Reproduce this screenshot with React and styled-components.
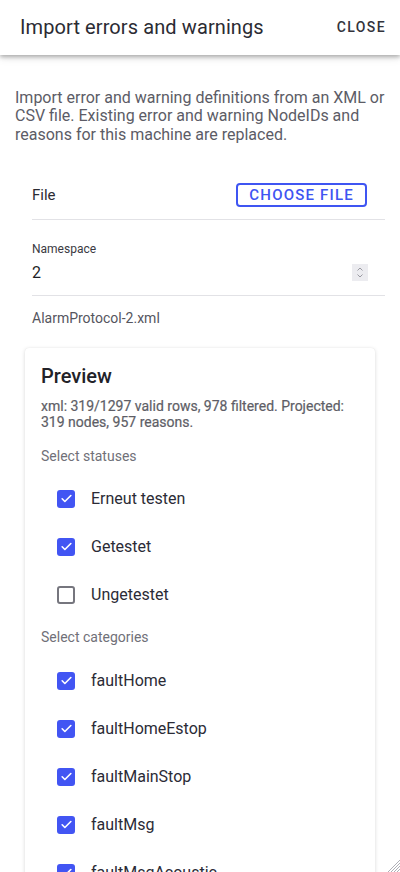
import React, { useState } from "react";
import styled, { createGlobalStyle } from "styled-components";

const Global = createGlobalStyle`
  html, body { margin: 0; padding: 0; background: #fff; }
  body { font-family: Roboto, "Noto Sans", "Liberation Sans", sans-serif; -webkit-font-smoothing: antialiased; }
  * { box-sizing: border-box; }
`;

const Screen = styled.div`
  position: relative;
  width: 400px;
  height: 872px;
  display: flex;
  flex-direction: column;
  overflow: hidden;
  background: #fff;
`;

const Header = styled.header`
  flex: 0 0 55px;
  display: flex;
  align-items: center;
  justify-content: space-between;
  padding: 0 14px 2px 20px;
  background: #fff;
  box-shadow: 0 2px 4px rgba(0, 0, 0, 0.28), 0 4px 8px rgba(0, 0, 0, 0.08);
  position: relative;
  z-index: 2;
`;

const Title = styled.h1`
  margin: 0;
  font-size: 20px;
  font-weight: 400;
  color: #2b2b33;
  letter-spacing: 0.1px;
`;

const TextButton = styled.button`
  border: 0;
  background: none;
  padding: 0;
  font-family: inherit;
  font-size: 14px;
  font-weight: 500;
  letter-spacing: 1.4px;
  color: #33333b;
  cursor: pointer;
`;

const Body = styled.main`
  flex: 1;
  overflow: hidden;
  padding: 34px 15px 0 15px;
  display: flex;
  flex-direction: column;
`;

const Description = styled.p`
  margin: 0;
  font-size: 16px;
  line-height: 18.3px;
  color: #5c5c66;
`;

const Form = styled.div`
  margin-top: 28px;
  padding-left: 17px;
  display: flex;
  flex-direction: column;
`;

const Row = styled.div`
  height: 48px;
  display: flex;
  align-items: center;
  justify-content: space-between;
  border-bottom: 1px solid #e2e2e6;
  padding-right: 18px;
`;

const RowLabel = styled.span`
  font-size: 15px;
  color: #2b2b33;
`;

const OutlineButton = styled.button`
  height: 24px;
  padding: 0 11px;
  border: 2px solid #3f55f2;
  border-radius: 4px;
  background: #fff;
  color: #3f55f2;
  font-family: inherit;
  font-size: 15px;
  font-weight: 500;
  letter-spacing: 1.2px;
  line-height: 18px;
  cursor: pointer;
`;

const Field = styled.div`
  padding: 21px 0 10px;
  border-bottom: 1px solid #e2e2e6;
  display: flex;
  flex-direction: column;
  gap: 4px;
`;

const FieldLabel = styled.label`
  font-size: 12px;
  line-height: 16px;
  color: #3a3a42;
`;

const FieldValue = styled.div`
  display: flex;
  align-items: center;
  justify-content: space-between;
  padding-right: 17px;
  font-size: 16px;
  line-height: 24px;
  color: #1f1f26;
`;

const Spinner = styled.span`
  width: 16px;
  height: 17px;
  background: #ececf0;
  display: flex;
  align-items: center;
  justify-content: center;
`;

const FileName = styled.div`
  padding-top: 13px;
  font-size: 14px;
  line-height: 18px;
  color: #55555e;
`;

const Card = styled.section`
  margin: 21px 10px 0 10px;
  padding: 14px 16px 0;
  border-radius: 4px;
  background: #fff;
  box-shadow: 0 1px 4px rgba(0, 0, 0, 0.14), 0 0 1px rgba(0, 0, 0, 0.1);
  display: flex;
  flex-direction: column;
  flex: 1 0 auto;
`;

const CardTitle = styled.h2`
  margin: 0;
  font-size: 20px;
  line-height: 28px;
  font-weight: 500;
  color: #222228;
`;

const Stats = styled.p`
  margin: 8px 0 0;
  font-size: 14px;
  line-height: 16px;
  font-weight: 400;
  color: #5e5e66;
  -webkit-text-stroke: 0.2px #5e5e66;
`;

const GroupLabel = styled.div`
  margin-top: ${(p) => p.$top}px;
  margin-bottom: ${(p) => p.$bottom}px;
  font-size: 14px;
  line-height: 16px;
  color: #707078;
`;

const OptionRow = styled.label`
  height: 48px;
  display: flex;
  align-items: center;
  gap: 16px;
  padding-left: 16px;
  font-size: 16px;
  color: #2b2b36;
  cursor: pointer;
`;

const Box = styled.span`
  width: 18px;
  height: 18px;
  border-radius: 3px;
  flex: 0 0 18px;
  display: flex;
  align-items: center;
  justify-content: center;
  background: ${(p) => (p.$on ? "#4255f3" : "#fff")};
  border: ${(p) => (p.$on ? "none" : "2px solid #76767e")};
`;

const ResizeGrip = styled.svg`
  position: absolute;
  right: 0;
  bottom: 0;
  width: 13px;
  height: 13px;
  z-index: 3;
`;

function Check({ on }) {
  return (
    <Box $on={on}>
      {on && (
        <svg width="13" height="13" viewBox="0 0 24 24" fill="none">
          <path d="M4 12.5l5 5L20 6.5" stroke="#fff" strokeWidth="3" strokeLinecap="round" strokeLinejoin="round" />
        </svg>
      )}
    </Box>
  );
}

function Option({ label, initial }) {
  const [on, setOn] = useState(initial);
  return (
    <OptionRow onClick={() => setOn(!on)}>
      <Check on={on} />
      {label}
    </OptionRow>
  );
}

const statuses = [
  ["Erneut testen", true],
  ["Getestet", true],
  ["Ungetestet", false],
];

const categories = ["faultHome", "faultHomeEstop", "faultMainStop", "faultMsg", "faultMsgAcoustic"];

export default function App() {
  return (
    <>
      <Global />
      <Screen>
        <Header>
          <Title>Import errors and warnings</Title>
          <TextButton>CLOSE</TextButton>
        </Header>
        <Body>
          <Description>
            Import error and warning definitions from an XML or CSV file. Existing error and warning NodeIDs and
            reasons for this machine are replaced.
          </Description>
          <Form>
            <Row>
              <RowLabel>File</RowLabel>
              <OutlineButton>CHOOSE FILE</OutlineButton>
            </Row>
            <Field>
              <FieldLabel>Namespace</FieldLabel>
              <FieldValue>
                2
                <Spinner>
                  <svg width="10" height="13" viewBox="0 0 10 13" fill="none">
                    <path d="M2.5 4.5L5 2l2.5 2.5M2.5 8.5L5 11l2.5-2.5" stroke="#9a9aa2" strokeWidth="1" />
                  </svg>
                </Spinner>
              </FieldValue>
            </Field>
            <FileName>AlarmProtocol-2.xml</FileName>
          </Form>
          <Card>
            <CardTitle>Preview</CardTitle>
            <Stats>xml: 319/1297 valid rows, 978 filtered. Projected: 319 nodes, 957 reasons.</Stats>
            <GroupLabel $top={18} $bottom={11}>Select statuses</GroupLabel>
            {statuses.map(([l, v]) => (
              <Option key={l} label={l} initial={v} />
            ))}
            <GroupLabel $top={10} $bottom={12}>Select categories</GroupLabel>
            {categories.map((l) => (
              <Option key={l} label={l} initial />
            ))}
          </Card>
        </Body>
        <ResizeGrip viewBox="0 0 13 13">
          <path d="M13 1L1 13M13 4L4 13M13 7L7 13M13 10L10 13" stroke="#9c9ca4" strokeWidth="0.8" />
        </ResizeGrip>
      </Screen>
    </>
  );
}
